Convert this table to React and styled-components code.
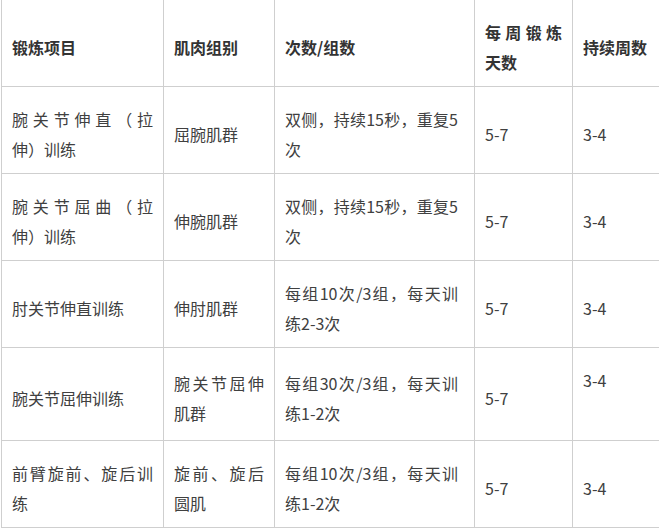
import React from "react";
import styled, { createGlobalStyle } from "styled-components";

const Global = createGlobalStyle`
  html, body { margin: 0; padding: 0; background: #fff; }
  body { font-family: "Noto Sans CJK SC", "Noto Sans", sans-serif; }
`;

const Wrap = styled.div`
  width: 659px;
  height: 530px;
  overflow: hidden;
  padding-left: 1px;
  box-sizing: border-box;
`;

const Table = styled.table`
  border-collapse: collapse;
  table-layout: fixed;
  width: 680px;
  margin-top: -1px;
  font-size: 16px;
  line-height: 30px;
  text-spacing-trim: space-all;
`;

const Col = styled.col`
  width: ${(p) => p.$w}px;
`;

const Row = styled.tr`
  height: ${(p) => p.$h}px;
`;

const Cell = styled.td`
  border: 1px solid #cfcfcf;
  padding: ${(p) => (p.$top ? "17px" : "7px")} ${(p) => p.$pr || 10}px 0 10px;
  vertical-align: ${(p) => (p.$top ? "top" : "middle")};
  text-align: justify;
  color: #404040;
  text-spacing-trim: space-all;
`;

const Head = styled(Cell).attrs({ as: "th" })`
  font-weight: 700;
  color: #333;
`;

const cols = [162, 111, 200, 98, 109];
const rightPad = [10, 10, 16, 10, 10];

const headers = ["锻炼项目", "肌肉组别", "次数/组数", "每周锻炼天数", "持续周数"];

const rows = [
  { h: 87, c: ["腕关节伸直（拉伸）训练", "屈腕肌群", "双侧，持续15秒，重复5次", "5-7", "3-4"] },
  { h: 87, c: ["腕关节屈曲（拉伸）训练", "伸腕肌群", "双侧，持续15秒，重复5次", "5-7", "3-4"] },
  { h: 87, c: ["肘关节伸直训练", "伸肘肌群", "每组10次/3组，每天训练2-3次", "5-7", "3-4"] },
  { h: 93, c: ["腕关节屈伸训练", "腕关节屈伸肌群", "每组30次/3组，每天训练1-2次", "5-7", "3-4"], topLast: true },
  { h: 87, c: ["前臂旋前、旋后训练", "旋前、旋后圆肌", "每组10次/3组，每天训练1-2次", "5-7", "3-4"] },
];

export default function App() {
  return (
    <Wrap>
      <Global />
      <Table>
        <colgroup>
          {cols.map((w, i) => (
            <Col key={i} $w={w} />
          ))}
        </colgroup>
        <thead>
          <Row $h={87}>
            {headers.map((t, j) => (
              <Head key={t} $pr={rightPad[j]}>{t}</Head>
            ))}
          </Row>
        </thead>
        <tbody>
          {rows.map((r, i) => (
            <Row key={i} $h={r.h}>
              {r.c.map((t, j) => (
                <Cell key={j} $pr={rightPad[j]} $top={r.topLast && j === 4}>
                  {t}
                </Cell>
              ))}
            </Row>
          ))}
        </tbody>
      </Table>
    </Wrap>
  );
}
